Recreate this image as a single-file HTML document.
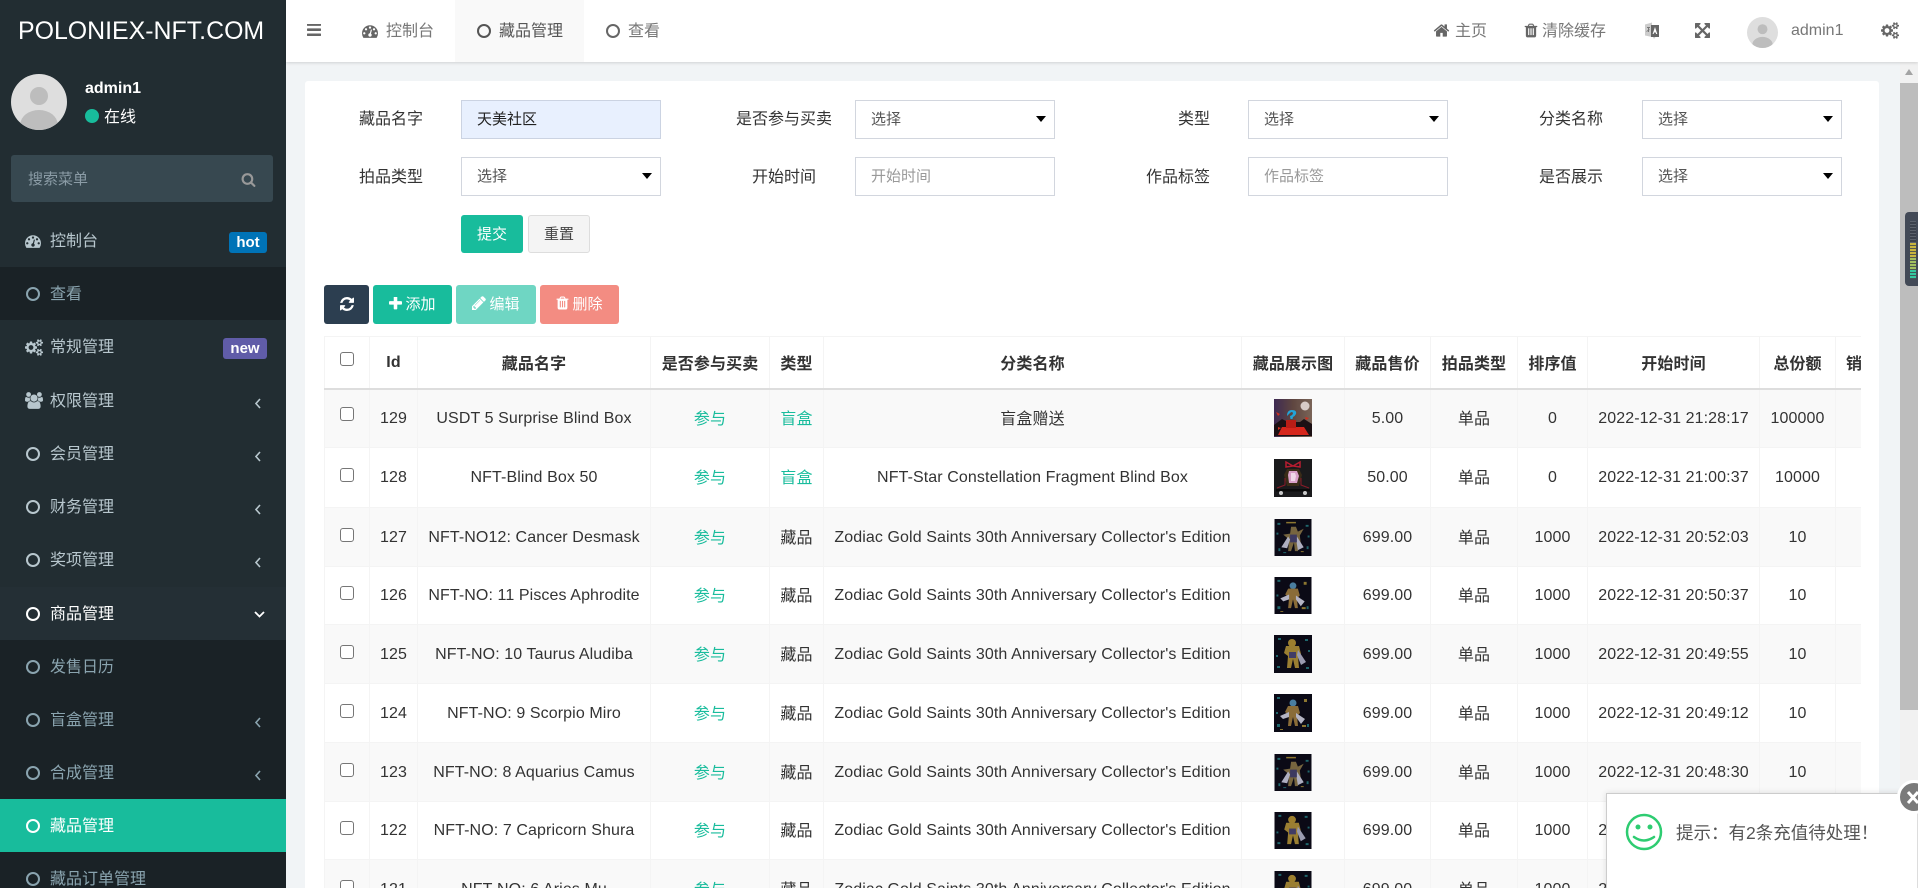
<!DOCTYPE html>
<html lang="zh-CN"><head><meta charset="utf-8"><title>藏品管理</title>
<style>
*{box-sizing:border-box}
html,body{margin:0;padding:0;width:1918px;height:888px;overflow:hidden;background:#f1f4f6}
body{font-family:"Liberation Sans","Noto Sans CJK SC",sans-serif;font-size:16px;color:#333;position:relative}
.a{position:absolute}
.t{position:absolute;white-space:nowrap;line-height:24px;height:24px}
svg{display:block}
#side{position:absolute;left:0;top:0;width:286px;height:888px;background:#222d32;overflow:hidden}
.m{position:absolute;left:0;width:286px;height:53px;color:#b8c7ce}
.m .l{position:absolute;left:50px;top:16px;line-height:24px;white-space:nowrap}
.m.s{background:#1a2226;color:#8aa4af}
.m.w{color:#fff}
.ic{position:absolute;left:25px;top:19px;fill:currentColor}
.ring{position:absolute;left:26px;top:20px;width:14px;height:14px;border:2.5px solid currentColor;border-radius:50%}
.chev{position:absolute;left:255px;top:24px;fill:none;stroke:currentColor;stroke-width:1.6}
.bd{position:absolute;color:#fff;font-weight:700;font-size:15px;line-height:21px;height:21px;text-align:center;border-radius:3px}
#head{position:absolute;left:286px;top:0;width:1632px;height:62px;background:#fff;box-shadow:0 1px 3px rgba(0,0,0,.14);z-index:3}
.h{position:absolute;color:#777;white-space:nowrap;line-height:24px}
.hi{position:absolute;fill:#666}
#panel{position:absolute;left:305px;top:81px;width:1574px;height:830px;background:#fff;border-radius:3px}
.lb{position:absolute;white-space:nowrap;line-height:24px;color:#333;text-align:right}
.inp{position:absolute;width:200px;height:39px;border:1px solid #d2d6de;background:#fff;font-size:15px;color:#555;line-height:37px;padding-left:15px}
.inp.ph{color:#999}
.inp.sel:after{content:"";position:absolute;right:8px;top:15px;border-left:5px solid transparent;border-right:5px solid transparent;border-top:6px solid #000}
.btn{position:absolute;height:39px;border-radius:3px;color:#fff;font-size:15px;line-height:39px;text-align:center;white-space:nowrap}
.btn svg{display:inline-block;vertical-align:-1px;fill:#fff;margin-right:3px}
#tw{position:absolute;left:324px;top:336px;width:1537px;height:560px;overflow:hidden}
table{border-collapse:collapse;table-layout:fixed;width:1600px;font-size:16px}
th,td{border:1px solid #f4f4f4;text-align:center;vertical-align:middle;padding:0 0 3px;white-space:nowrap;overflow:hidden;color:#333;letter-spacing:.1px}
th{font-weight:700;border-bottom:2px solid #ddd;height:52px;padding-bottom:0}
th:nth-child(2){padding-top:2px}
td:nth-child(2),td:nth-child(3),td:nth-child(6),td:nth-child(8),td:nth-child(10),td:nth-child(11),td:nth-child(12){padding:1px 0 0}
tr.o td{background:#f9f9f9}
td.g{color:#18bc9c}
.cb{display:block;width:14px;height:14px;margin:0 auto 2px;border:1px solid #767676;border-radius:3px;background:#fff}
td svg{margin:3px auto 0}
#pop{position:absolute;left:1606px;top:793px;width:312px;height:95px;background:#fff;border:1px solid #ccc;border-bottom:0;border-right:1px solid #ddd;box-shadow:0 0 6px rgba(0,0,0,.12);z-index:6}
</style></head><body>

<div id="side">
<div class="t" style="left:18px;top:17px;font-size:24.9px;line-height:28px;height:28px;color:#fff">POLONIEX-NFT.COM</div>
<svg class="a" style="left:11px;top:74px" width="56" height="56" viewBox="0 0 56 56"><defs><clipPath id="c1"><circle cx="28" cy="28" r="28"/></clipPath></defs><circle cx="28" cy="28" r="28" fill="#dedede"/><circle cx="28" cy="22" r="9" fill="#bdbdbd"/><ellipse cx="28" cy="50" rx="18.500" ry="14" fill="#bdbdbd" clip-path="url(#c1)"/></svg>
<div class="t" style="left:85px;top:77px;color:#fff;font-weight:700">admin1</div>
<div class="a" style="left:85px;top:109px;width:14px;height:14px;border-radius:50%;background:#18bc9c"></div>
<div class="t" style="left:104px;top:106px;color:#fff">在线</div>
<div class="a" style="left:11px;top:155px;width:262px;height:47px;background:#374850;border-radius:3px"></div>
<div class="t" style="left:28px;top:168px;font-size:15px;color:#8b9ca6">搜索菜单</div>
<svg class="a" style="left:241px;top:172px;fill:#999" width="15" height="15" viewBox="0 0 1792 1792"><path d="M1216 832q0-185-131.500-316.500t-316.500-131.500-316.500 131.500-131.500 316.500 131.500 316.500 316.500 131.500 316.500-131.500 131.500-316.500zm512 832q0 52-38 90t-90 38q-54 0-90-38l-343-342q-179 124-399 124-143 0-273.500-55.500t-225-150-150-225-55.500-273.500 55.500-273.500 150-225 225-150 273.500-55.500 273.500 55.500 225 150 150 225 55.500 273.500q0 220-124 399l343 343q37 37 37 90z"/></svg>

<div class="m" style="top:214px"><svg class="ic" width="16" height="16" viewBox="0 0 1792 1792"><path d="M384 1152q0-53-37.500-90.500t-90.500-37.500-90.500 37.500-37.500 90.500 37.500 90.500 90.500 37.500 90.500-37.500 37.500-90.500zm192-448q0-53-37.500-90.500t-90.500-37.500-90.500 37.500-37.500 90.500 37.500 90.500 90.500 37.500 90.500-37.500 37.500-90.500zm428 481l101-382q6-26-7.500-48.500t-38.500-29.500-48 6.500-30 39.500l-101 382q-60 5-107 43.500t-63 98.500q-20 77 20 146t117 89 146-20 89-117q16-60-6-117t-72-91zm660-33q0-53-37.500-90.500t-90.500-37.500-90.500 37.500-37.500 90.500 37.500 90.500 90.500 37.500 90.500-37.500 37.500-90.500zm-640-640q0-53-37.500-90.500t-90.500-37.500-90.500 37.500-37.500 90.500 37.500 90.500 90.500 37.500 90.500-37.500 37.500-90.500zm448 192q0-53-37.500-90.500t-90.500-37.500-90.500 37.500-37.500 90.500 37.500 90.500 90.500 37.500 90.500-37.500 37.500-90.500zm320 448q0 261-141 483-19 29-54 29h-1402q-35 0-54-29-141-221-141-483 0-182 71-348t191-286 286-191 348-71 348 71 286 191 191 286 71 348z"/></svg><span class="l">控制台</span><span class="bd" style="left:229px;top:18px;width:38px;background:#0073b7">hot</span></div>
<div class="m s" style="top:267px"><span class="ring"></span><span class="l">查看</span></div>
<div class="m" style="top:320px"><svg class="ic" width="18" height="17" viewBox="0 0 1920 1792"><path d="M896 896q0-106-75-181t-181-75-181 75-75 181 75 181 181 75 181-75 75-181zm768 512q0-52-38-90t-90-38-90 38-38 90q0 53 37.500 90.500t90.500 37.500 90.500-37.500 37.500-90.500zm0-1024q0-52-38-90t-90-38-90 38-38 90q0 53 37.500 90.500t90.500 37.500 90.500-37.500 37.500-90.500zm-384 421v185q0 10-7 19.500t-16 10.500l-155 24q-11 35-32 76 34 48 90 115 7 11 7 20 0 12-7 19-23 30-82.500 89.500t-78.500 59.500q-11 0-21-7l-115-90q-37 19-77 31-11 108-23 155-7 24-30 24h-186q-11 0-20-7.500t-10-17.500l-23-153q-34-10-75-31l-118 89q-7 7-20 7-11 0-21-8-144-133-144-160 0-9 7-19 10-14 41-53t47-61q-23-44-35-82l-152-24q-10-1-17-9.500t-7-19.500v-185q0-10 7-19.500t16-10.500l155-24q11-35 32-76-34-48-90-115-7-11-7-20 0-12 7-20 22-30 82-89t79-59q11 0 21 7l115 90q34-18 77-32 11-108 23-154 7-24 30-24h186q11 0 20 7.500t10 17.500l23 153q34 10 75 31l118-89q8-7 20-7 11 0 21 8 144 133 144 160 0 8-7 19-12 16-42 54t-45 60q23 48 34 82l152 23q10 2 17 10.500t7 19.500zm640 533v140q0 16-149 31-12 27-30 52 51 113 51 138 0 4-4 7-122 71-124 71-8 0-46-47t-52-68q-20 2-30 2t-30-2q-14 21-52 68t-46 47q-2 0-124-71-4-3-4-7 0-25 51-138-18-25-30-52-149-15-149-31v-140q0-16 149-31 13-29 30-52-51-113-51-138 0-4 4-7 4-2 35-20t59-34 30-16q8 0 46 46.500t52 67.500q20-2 30-2t30 2q51-71 92-112l6-2q4 0 124 70 4 3 4 7 0 25-51 138 17 23 30 52 149 15 149 31zm0-1024v140q0 16-149 31-12 27-30 52 51 113 51 138 0 4-4 7-122 71-124 71-8 0-46-47t-52-68q-20 2-30 2t-30-2q-14 21-52 68t-46 47q-2 0-124-71-4-3-4-7 0-25 51-138-18-25-30-52-149-15-149-31v-140q0-16 149-31 13-29 30-52-51-113-51-138 0-4 4-7 4-2 35-20t59-34 30-16q8 0 46 46.500t52 67.500q20-2 30-2t30 2q51-71 92-112l6-2q4 0 124 70 4 3 4 7 0 25-51 138 17 23 30 52 149 15 149 31z"/></svg><span class="l">常规管理</span><span class="bd" style="left:223px;top:18px;width:44px;background:#605ca8">new</span></div>
<div class="m" style="top:374px"><svg class="ic" style="top:18px" width="18" height="17" viewBox="0 0 1920 1792"><path d="M593 896q-162 5-265 128h-134q-82 0-138-40.500t-56-118.500q0-353 124-353 6 0 43.500 21t97.500 42.500 119 21.500q67 0 133-23-5 37-5 66 0 139 81 256zm1071 637q0 120-73 189.500t-194 69.500h-874q-121 0-194-69.500t-73-189.500q0-53 3.500-103.500t14-109 26.500-108.500 43-97.500 62-81 85.500-53.500 111.500-20q10 0 43 21.500t73 48 107 48 135 21.500 135-21.500 107-48 73-48 43-21.500q61 0 111.500 20t85.500 53.500 62 81 43 97.500 26.500 108.500 14 109 3.500 103.500zm-1024-1277q0 106-75 181t-181 75-181-75-75-181 75-181 181-75 181 75 75 181zm704 384q0 159-112.500 271.500t-271.500 112.500-271.500-112.500-112.500-271.500 112.500-271.500 271.500-112.500 271.500 112.500 112.500 271.500zm576 225q0 78-56 118.500t-138 40.500h-134q-103-123-265-128 81-117 81-256 0-29-5-66 66 23 133 23 59 0 119-21.500t97.500-42.500 43.500-21q124 0 124 353zm-128-609q0 106-75 181t-181 75-181-75-75-181 75-181 181-75 181 75 75 181z"/></svg><span class="l">权限管理</span><svg class="chev" width="6" height="11" viewBox="0 0 6 11"><path d="M5 1L1 5.500 5 10"/></svg></div>
<div class="m" style="top:427px"><span class="ring"></span><span class="l">会员管理</span><svg class="chev" width="6" height="11" viewBox="0 0 6 11"><path d="M5 1L1 5.500 5 10"/></svg></div>
<div class="m" style="top:480px"><span class="ring"></span><span class="l">财务管理</span><svg class="chev" width="6" height="11" viewBox="0 0 6 11"><path d="M5 1L1 5.500 5 10"/></svg></div>
<div class="m" style="top:533px"><span class="ring"></span><span class="l">奖项管理</span><svg class="chev" width="6" height="11" viewBox="0 0 6 11"><path d="M5 1L1 5.500 5 10"/></svg></div>
<div class="m w" style="top:587px;background:#242f35"><span class="ring"></span><span class="l">商品管理</span><svg class="chev" style="left:254px;top:24px;stroke-width:1.8" width="11" height="7" viewBox="0 0 11 7"><path d="M1 1l4.500 4.500L10 1"/></svg></div>
<div class="m s" style="top:640px"><span class="ring"></span><span class="l">发售日历</span></div>
<div class="m s" style="top:693px"><span class="ring"></span><span class="l">盲盒管理</span><svg class="chev" width="6" height="11" viewBox="0 0 6 11"><path d="M5 1L1 5.500 5 10"/></svg></div>
<div class="m s" style="top:746px"><span class="ring"></span><span class="l">合成管理</span><svg class="chev" width="6" height="11" viewBox="0 0 6 11"><path d="M5 1L1 5.500 5 10"/></svg></div>
<div class="m w" style="top:799px;background:#18bc9c"><span class="ring"></span><span class="l">藏品管理</span></div>
<div class="m s" style="top:852px;height:36px"><span class="ring"></span><span class="l">藏品订单管理</span></div>
</div>

<div id="head">
<div class="a" style="left:169px;top:0;width:129px;height:62px;background:#f9f9f9"></div>
<svg class="hi" style="left:21px;top:24px" width="14" height="12" viewBox="128 320 1536 1216" preserveAspectRatio="none"><path d="M1664 1344v128q0 26-19 45t-45 19h-1408q-26 0-45-19t-19-45v-128q0-26 19-45t45-19h1408q26 0 45 19t19 45zm0-512v128q0 26-19 45t-45 19h-1408q-26 0-45-19t-19-45v-128q0-26 19-45t45-19h1408q26 0 45 19t19 45zm0-512v128q0 26-19 45t-45 19h-1408q-26 0-45-19t-19-45v-128q0-26 19-45t45-19h1408q26 0 45 19t19 45z"/></svg>
<svg class="hi" style="left:76px;top:23px" width="16" height="16" viewBox="0 0 1792 1792"><path d="M384 1152q0-53-37.500-90.500t-90.500-37.500-90.500 37.500-37.500 90.500 37.500 90.500 90.500 37.500 90.500-37.500 37.500-90.500zm192-448q0-53-37.500-90.500t-90.500-37.500-90.500 37.500-37.500 90.500 37.500 90.500 90.500 37.500 90.500-37.500 37.500-90.500zm428 481l101-382q6-26-7.500-48.500t-38.500-29.500-48 6.500-30 39.500l-101 382q-60 5-107 43.500t-63 98.500q-20 77 20 146t117 89 146-20 89-117q16-60-6-117t-72-91zm660-33q0-53-37.500-90.500t-90.500-37.500-90.500 37.500-37.500 90.500 37.500 90.500 90.500 37.500 90.500-37.500 37.500-90.500zm-640-640q0-53-37.500-90.500t-90.500-37.500-90.500 37.500-37.500 90.500 37.500 90.500 90.500 37.500 90.500-37.500 37.500-90.500zm448 192q0-53-37.500-90.500t-90.500-37.500-90.500 37.500-37.500 90.500 37.500 90.500 90.500 37.500 90.500-37.500 37.500-90.500zm320 448q0 261-141 483-19 29-54 29h-1402q-35 0-54-29-141-221-141-483 0-182 71-348t191-286 286-191 348-71 348 71 286 191 191 286 71 348z"/></svg>
<span class="h" style="left:100px;top:20px">控制台</span>
<span class="a" style="left:191px;top:24px;width:14px;height:14px;border:2.5px solid #555;border-radius:50%"></span>
<span class="h" style="left:213px;top:20px;color:#555">藏品管理</span>
<span class="a" style="left:320px;top:24px;width:14px;height:14px;border:2.5px solid #666;border-radius:50%"></span>
<span class="h" style="left:342px;top:20px">查看</span>
<svg class="hi" style="left:1147px;top:22px" width="17" height="17" viewBox="0 0 1792 1792"><path d="M1472 992v480q0 26-19 45t-45 19h-384v-384h-256v384h-384q-26 0-45-19t-19-45v-480q0-1 .5-3t.5-3l575-474 575 474q1 2 1 6zm223-69l-62 74q-8 9-21 11h-3q-13 0-21-7l-692-577-692 577q-12 8-24 7-13-2-21-11l-62-74q-8-10-7-23.500t11-21.500l719-599q32-26 76-26t76 26l244 204v-195q0-14 9-23t23-9h192q14 0 23 9t9 23v408l219 182q10 8 11 21.500t-7 23.500z"/></svg>
<span class="h" style="left:1169px;top:20px">主页</span>
<svg class="hi" style="left:1237px;top:22px" width="16" height="17" viewBox="0 0 1792 1792"><path d="M704 1376v-704q0-14-9-23t-23-9h-64q-14 0-23 9t-9 23v704q0 14 9 23t23 9h64q14 0 23-9t9-23zm256 0v-704q0-14-9-23t-23-9h-64q-14 0-23 9t-9 23v704q0 14 9 23t23 9h64q14 0 23-9t9-23zm256 0v-704q0-14-9-23t-23-9h-64q-14 0-23 9t-9 23v704q0 14 9 23t23 9h64q14 0 23-9t9-23zm-544-992h448l-48-117q-7-9-17-11h-317q-10 2-17 11zm928 32v64q0 14-9 23t-23 9h-96v948q0 83-47 143.500t-113 60.500h-832q-66 0-113-58.500t-47-141.500v-952h-96q-14 0-23-9t-9-23v-64q0-14 9-23t23-9h309l70-167q15-37 54-63t79-26h320q40 0 79 26t54 63l70 167h309q14 0 23 9t9 23z"/></svg>
<span class="h" style="left:1256px;top:20px">清除缓存</span>
<svg class="a" style="left:1358px;top:22px" width="15" height="17" viewBox="0 0 15 17"><path d="M1 2.500L8 .5V15L1 13.500z" fill="#ccc"/><path d="M3 5h3v1H3zm1 1h1v4H4zM2.500 9l3-2v1l-3 2z" fill="#777"/><path d="M7 3h8v12H7z" fill="#666"/><path d="M11 5l2.300 7h-1.200l-.4-1.500H10L9.700 12H8.600z" fill="#fff"/><path d="M9 15l1 2 1.500-2z" fill="#ccc"/></svg>
<svg class="hi" style="left:1409px;top:23px" width="15" height="15" viewBox="128 128 1536 1536"><path d="M1411 541l-355 355 355 355 144-144q29-31 70-14 39 17 39 59v448q0 26-19 45t-45 19h-448q-42 0-59-40-17-39 14-69l144-144-355-355-355 355 144 144q31 30 14 69-17 40-59 40h-448q-26 0-45-19t-19-45v-448q0-42 40-59 39-17 69 14l144 144 355-355-355-355-144 144q-19 19-45 19-12 0-24-5-40-17-40-59v-448q0-26 19-45t45-19h448q42 0 59 40 17 39-14 69l-144 144 355 355 355-355-144-144q-31-30-14-69 17-40 59-40h448q26 0 45 19t19 45v448q0 42-39 59-13 5-25 5-26 0-45-19z"/></svg>
<svg class="a" style="left:1461px;top:17px" width="31" height="31" viewBox="0 0 56 56"><defs><clipPath id="c2"><circle cx="28" cy="28" r="28"/></clipPath></defs><circle cx="28" cy="28" r="28" fill="#dedede"/><circle cx="28" cy="22" r="9" fill="#bdbdbd"/><ellipse cx="28" cy="50" rx="18.500" ry="14" fill="#bdbdbd" clip-path="url(#c2)"/></svg>
<span class="h" style="left:1505px;top:19px">admin1</span>
<svg class="hi" style="left:1595px;top:22px" width="18" height="17" viewBox="0 0 1920 1792"><path d="M896 896q0-106-75-181t-181-75-181 75-75 181 75 181 181 75 181-75 75-181zm768 512q0-52-38-90t-90-38-90 38-38 90q0 53 37.500 90.500t90.500 37.500 90.500-37.500 37.500-90.500zm0-1024q0-52-38-90t-90-38-90 38-38 90q0 53 37.500 90.500t90.500 37.500 90.500-37.500 37.500-90.500zm-384 421v185q0 10-7 19.500t-16 10.500l-155 24q-11 35-32 76 34 48 90 115 7 11 7 20 0 12-7 19-23 30-82.500 89.500t-78.500 59.500q-11 0-21-7l-115-90q-37 19-77 31-11 108-23 155-7 24-30 24h-186q-11 0-20-7.500t-10-17.500l-23-153q-34-10-75-31l-118 89q-7 7-20 7-11 0-21-8-144-133-144-160 0-9 7-19 10-14 41-53t47-61q-23-44-35-82l-152-24q-10-1-17-9.500t-7-19.500v-185q0-10 7-19.500t16-10.500l155-24q11-35 32-76-34-48-90-115-7-11-7-20 0-12 7-20 22-30 82-89t79-59q11 0 21 7l115 90q34-18 77-32 11-108 23-154 7-24 30-24h186q11 0 20 7.500t10 17.500l23 153q34 10 75 31l118-89q8-7 20-7 11 0 21 8 144 133 144 160 0 8-7 19-12 16-42 54t-45 60q23 48 34 82l152 23q10 2 17 10.500t7 19.500zm640 533v140q0 16-149 31-12 27-30 52 51 113 51 138 0 4-4 7-122 71-124 71-8 0-46-47t-52-68q-20 2-30 2t-30-2q-14 21-52 68t-46 47q-2 0-124-71-4-3-4-7 0-25 51-138-18-25-30-52-149-15-149-31v-140q0-16 149-31 13-29 30-52-51-113-51-138 0-4 4-7 4-2 35-20t59-34 30-16q8 0 46 46.500t52 67.500q20-2 30-2t30 2q51-71 92-112l6-2q4 0 124 70 4 3 4 7 0 25-51 138 17 23 30 52 149 15 149 31zm0-1024v140q0 16-149 31-12 27-30 52 51 113 51 138 0 4-4 7-122 71-124 71-8 0-46-47t-52-68q-20 2-30 2t-30-2q-14 21-52 68t-46 47q-2 0-124-71-4-3-4-7 0-25 51-138-18-25-30-52-149-15-149-31v-140q0-16 149-31 13-29 30-52-51-113-51-138 0-4 4-7 4-2 35-20t59-34 30-16q8 0 46 46.500t52 67.500q20-2 30-2t30 2q51-71 92-112l6-2q4 0 124 70 4 3 4 7 0 25-51 138 17 23 30 52 149 15 149 31z"/></svg>
</div>

<div id="panel"></div>

<span class="lb" style="left:359px;top:108px">藏品名字</span>
<div class="inp" style="left:461px;top:100px;background:#e8f0fe;border-color:#cbd3e2;color:#222">天美社区</div>
<span class="lb" style="left:736px;top:108px">是否参与买卖</span>
<div class="inp sel" style="left:855px;top:100px">选择</div>
<span class="lb" style="left:1178px;top:108px">类型</span>
<div class="inp sel" style="left:1248px;top:100px">选择</div>
<span class="lb" style="left:1539px;top:108px">分类名称</span>
<div class="inp sel" style="left:1642px;top:100px">选择</div>

<span class="lb" style="left:359px;top:166px">拍品类型</span>
<div class="inp sel" style="left:461px;top:157px">选择</div>
<span class="lb" style="left:752px;top:166px">开始时间</span>
<div class="inp ph" style="left:855px;top:157px">开始时间</div>
<span class="lb" style="left:1146px;top:166px">作品标签</span>
<div class="inp ph" style="left:1248px;top:157px">作品标签</div>
<span class="lb" style="left:1539px;top:166px">是否展示</span>
<div class="inp sel" style="left:1642px;top:157px">选择</div>

<div class="btn" style="left:461px;top:215px;width:62px;height:38px;background:#18bc9c;line-height:39px">提交</div>
<div class="btn" style="left:528px;top:215px;width:62px;height:38px;background:#f4f4f4;border:1px solid #ddd;color:#444;line-height:37px">重置</div>

<div class="btn" style="left:324px;top:285px;width:45px;background:#2c3e50"><svg style="margin:12px auto 0;vertical-align:top" width="14" height="14" viewBox="128 128 1536 1536"><path d="M1639 1056q0 5-1 7-64 268-268 434.500t-478 166.500q-146 0-282.500-55t-243.500-157l-129 129q-19 19-45 19t-45-19-19-45v-448q0-26 19-45t45-19h448q26 0 45 19t19 45-19 45l-137 137q71 66 161 102t187 36q134 0 250-65t186-179q11-17 53-117 8-23 30-23h192q13 0 22.500 9.500t9.500 22.500zm25-800v448q0 26-19 45t-45 19h-448q-26 0-45-19t-19-45 19-45l138-138q-148-137-349-137-134 0-250 65t-186 179q-11 17-53 117-8 23-30 23h-199q-13 0-22.500-9.500t-9.500-22.500v-7q65-268 270-434.500t480-166.500q146 0 284 55.500t245 156.500l130-129q19-19 45-19t45 19 19 45z"/></svg></div>
<div class="btn" style="left:373px;top:285px;width:79px;background:#18bc9c"><svg width="13" height="13" viewBox="192 192 1408 1408"><path d="M1600 736v192q0 40-28 68t-68 28h-416v416q0 40-28 68t-68 28h-192q-40 0-68-28t-28-68v-416h-416q-40 0-68-28t-28-68v-192q0-40 28-68t68-28h416v-416q0-40 28-68t68-28h192q40 0 68 28t28 68v416h416q40 0 68 28t28 68z"/></svg>添加</div>
<div class="btn" style="left:456px;top:285px;width:80px;background:#6fd6c3"><svg width="14" height="14" viewBox="128 128 1536 1536"><path d="M491 1536l91-91-235-235-91 91v107h128v128h107zm523-928q0-22-22-22-10 0-17 7l-542 542q-7 7-7 17 0 22 22 22 10 0 17-7l542-542q7-7 7-17zm-54-192l416 416-832 832h-416v-416zm683 96q0 53-37 90l-166 166-416-416 166-165q36-38 90-38 53 0 91 38l235 234q37 39 37 91z"/></svg>编辑</div>
<div class="btn" style="left:540px;top:285px;width:79px;background:#f38c82"><svg width="13" height="14" viewBox="128 128 1536 1536"><path d="M704 1376v-704q0-14-9-23t-23-9h-64q-14 0-23 9t-9 23v704q0 14 9 23t23 9h64q14 0 23-9t9-23zm256 0v-704q0-14-9-23t-23-9h-64q-14 0-23 9t-9 23v704q0 14 9 23t23 9h64q14 0 23-9t9-23zm256 0v-704q0-14-9-23t-23-9h-64q-14 0-23 9t-9 23v704q0 14 9 23t23 9h64q14 0 23-9t9-23zm-544-992h448l-48-117q-7-9-17-11h-317q-10 2-17 11zm928 32v64q0 14-9 23t-23 9h-96v948q0 83-47 143.500t-113 60.500h-832q-66 0-113-58.500t-47-141.500v-952h-96q-14 0-23-9t-9-23v-64q0-14 9-23t23-9h309l70-167q15-37 54-63t79-26h320q40 0 79 26t54 63l70 167h309q14 0 23 9t9 23z"/></svg>删除</div>

<svg width="0" height="0" style="position:absolute"><defs>
<symbol id="f1" viewBox="0 0 38 38"><rect width="38" height="38" fill="#0b0a16"/><path d="M3 4h3v2H3zM32 6h3v2h-3zM4 30h2v3H4zM33 28h2v3h-2zM2 14h2v2H2zM34 17h2v2h-2zM9 34h3v1H9z" fill="#1f666c"/><path d="M12 3h10v1.500H12zM27 33h3v1h-3z" fill="#8c7630"/><path d="M17 8h5l2 5 6-3-4 7 1 8-3 8h-3l-1-9-3 9h-3l1-12-6-5 7-1z" fill="#77653f"/><path d="M14 18l-7 11 6 1 3-9zM23 18l7 11-6 3-2-12z" fill="#aeaec0"/><path d="M16 16h7v8h-7z" fill="#3d3960"/></symbol>
<symbol id="f2" viewBox="0 0 38 38"><rect width="38" height="38" fill="#0b0a16"/><path d="M3 3h3v2H3zM33 30h2v3h-2zM3 30h3v3H3zM2 18h2v2H2z" fill="#1f666c"/><path d="M30 5h3v3h-3zM28 31h4v2h-4zM6 35h3v1H6z" fill="#8c7630"/><circle cx="19" cy="9" r="3.500" fill="#4a7ea0"/><path d="M14 12h10l2 7-3 3 1 10h-3l-2-9-2 9h-3l1-11-4-3z" fill="#8a6c38"/><path d="M6 22l9-4v5l-6 2zM22 19l9 6-4 5-5-7z" fill="#b4b4c4"/></symbol>
<symbol id="f3" viewBox="0 0 38 38"><rect width="38" height="38" fill="#0b0a16"/><path d="M4 3h3v2H4zM31 4h3v2h-3zM32 32h3v2h-3zM3 31h3v2H3zM34 15h2v2h-2zM2 20h2v2H2z" fill="#1f666c"/><circle cx="18" cy="8" r="4" fill="#9c7e2e"/><path d="M12 11h13l2 8-3 2 1 12h-4l-2-9-2 9h-4l1-12-4-3z" fill="#9a7e32"/><path d="M24 15l8 12-5 3-4-10z" fill="#9a9bb0"/><path d="M15 17h7v6h-7z" fill="#413c66"/></symbol>
<symbol id="b1" viewBox="0 0 38 38"><defs><linearGradient id="bg1" x1="0" y1="0" x2="1" y2="0"><stop offset="0" stop-color="#3e2a52"/><stop offset=".5" stop-color="#5f4640"/><stop offset="1" stop-color="#7a6558"/></linearGradient></defs><rect width="38" height="38" fill="url(#bg1)"/><circle cx="31" cy="7" r="4.500" fill="#d8ccc8"/><path d="M0 26l8-6 6 3h12l4-3 8 5v12H0z" fill="#1c1014"/><path d="M4 36l4-8h22l5 8z" fill="#d6261c"/><path d="M12 21h10v8H12z" fill="#b81d16"/><path d="M2 13l4 2-2 2zM31 18l4 1-3 2zM4 28l3 1-3 2z" fill="#d03020"/><path d="M13 17q0-6 5-6 5 0 4 4-1 2-3 3l-.5 2h-2l-.5-3q3-1 3-3-1-2-3 0z" fill="#22a4d8"/></symbol>
<symbol id="b2" viewBox="0 0 38 38"><rect width="38" height="38" fill="#1a1a1c"/><path d="M19 7l-7-4v5zM19 7l7-4v5z" fill="none" stroke="#b81c30" stroke-width="1.500"/><path d="M13 10h12l3 6-3 11H13l-3-11z" fill="#3a2c18"/><path d="M15 12h8l2 5-2 7h-8l-1-8z" fill="#d8a0c8"/><path d="M17 14h4l1 3-1 5h-4z" fill="#f0d8e8"/><path d="M3 29l8-3v-7M35 29l-8-3v-7" stroke="#8a1a28" fill="none"/><rect x="2" y="30" width="34" height="2.500" fill="#0a0a0a"/><circle cx="7" cy="34" r="2" fill="#c8c8c8"/><circle cx="31" cy="34" r="2" fill="#c8c8c8"/></symbol>
</defs></svg>

<div id="tw"><table>
<colgroup><col style="width:45px"><col style="width:48px"><col style="width:233px"><col style="width:119px"><col style="width:54px"><col style="width:418px"><col style="width:103px"><col style="width:86px"><col style="width:87px"><col style="width:70px"><col style="width:172px"><col style="width:76px"><col style="width:89px"></colgroup>
<tr><th><span class="cb" style="margin-bottom:6px"></span></th><th>Id</th><th>藏品名字</th><th>是否参与买卖</th><th>类型</th><th>分类名称</th><th>藏品展示图</th><th>藏品售价</th><th>拍品类型</th><th>排序值</th><th>开始时间</th><th>总份额</th><th style="text-align:left;padding-left:10px">销量</th></tr>
<tr class="o" style="height:59px"><td><span class="cb" style="margin-bottom:6px"></span></td><td>129</td><td>USDT 5 Surprise Blind Box</td><td class="g">参与</td><td class="g">盲盒</td><td style="padding:0 0 3px">盲盒赠送</td><td><svg width="38" height="38"><use href="#b1"/></svg></td><td>5.00</td><td>单品</td><td>0</td><td>2022-12-31 21:28:17</td><td>100000</td><td></td></tr>
<tr style="height:60px"><td><span class="cb"></span></td><td>128</td><td>NFT-Blind Box 50</td><td class="g">参与</td><td class="g">盲盒</td><td>NFT-Star Constellation Fragment Blind Box</td><td><svg width="38" height="38"><use href="#b2"/></svg></td><td>50.00</td><td>单品</td><td>0</td><td>2022-12-31 21:00:37</td><td>10000</td><td></td></tr>
<tr class="o" style="height:59px"><td><span class="cb"></span></td><td>127</td><td>NFT-NO12: Cancer Desmask</td><td class="g">参与</td><td>藏品</td><td>Zodiac Gold Saints 30th Anniversary Collector's Edition</td><td><svg width="38" height="37"><use href="#f1"/></svg></td><td>699.00</td><td>单品</td><td>1000</td><td>2022-12-31 20:52:03</td><td>10</td><td></td></tr>
<tr style="height:58px"><td><span class="cb"></span></td><td>126</td><td>NFT-NO: 11 Pisces Aphrodite</td><td class="g">参与</td><td>藏品</td><td>Zodiac Gold Saints 30th Anniversary Collector's Edition</td><td><svg width="38" height="37"><use href="#f2"/></svg></td><td>699.00</td><td>单品</td><td>1000</td><td>2022-12-31 20:50:37</td><td>10</td><td></td></tr>
<tr class="o" style="height:59px"><td><span class="cb"></span></td><td>125</td><td>NFT-NO: 10 Taurus Aludiba</td><td class="g">参与</td><td>藏品</td><td>Zodiac Gold Saints 30th Anniversary Collector's Edition</td><td><svg width="38" height="38"><use href="#f3"/></svg></td><td>699.00</td><td>单品</td><td>1000</td><td>2022-12-31 20:49:55</td><td>10</td><td></td></tr>
<tr style="height:59px"><td><span class="cb"></span></td><td>124</td><td>NFT-NO: 9 Scorpio Miro</td><td class="g">参与</td><td>藏品</td><td>Zodiac Gold Saints 30th Anniversary Collector's Edition</td><td><svg width="38" height="38"><use href="#f2"/></svg></td><td>699.00</td><td>单品</td><td>1000</td><td>2022-12-31 20:49:12</td><td>10</td><td></td></tr>
<tr class="o" style="height:59px"><td><span class="cb"></span></td><td>123</td><td>NFT-NO: 8 Aquarius Camus</td><td class="g">参与</td><td>藏品</td><td>Zodiac Gold Saints 30th Anniversary Collector's Edition</td><td><svg width="38" height="37"><use href="#f1"/></svg></td><td>699.00</td><td>单品</td><td>1000</td><td>2022-12-31 20:48:30</td><td>10</td><td></td></tr>
<tr style="height:58px"><td><span class="cb"></span></td><td>122</td><td>NFT-NO: 7 Capricorn Shura</td><td class="g">参与</td><td>藏品</td><td>Zodiac Gold Saints 30th Anniversary Collector's Edition</td><td><svg width="38" height="37"><use href="#f3"/></svg></td><td>699.00</td><td>单品</td><td>1000</td><td>2022-12-31 20:47:40</td><td>10</td><td></td></tr>
<tr class="o" style="height:59px"><td><span class="cb"></span></td><td>121</td><td>NFT-NO: 6 Aries Mu</td><td class="g">参与</td><td>藏品</td><td>Zodiac Gold Saints 30th Anniversary Collector's Edition</td><td><svg width="38" height="37"><use href="#f3"/></svg></td><td>699.00</td><td>单品</td><td>1000</td><td>2022-12-31 20:46:50</td><td>10</td><td></td></tr>
</table></div>

<div class="a" style="left:1900px;top:62px;width:18px;height:826px;background:#f1f1f1;z-index:2"></div>
<div class="a" style="left:1905px;top:69px;border-left:4.500px solid transparent;border-right:4.500px solid transparent;border-bottom:6px solid #a3a3a3;z-index:2"></div>
<div class="a" style="left:1900px;top:83px;width:18px;height:627px;background:#bdbdbd;z-index:2"></div>
<div class="a" style="left:1905px;top:212px;width:13px;height:74px;background:#434a57;border-radius:4px 0 0 4px;z-index:2"></div>
<div class="a" style="left:1910px;top:221px;width:6px;height:22px;background:repeating-linear-gradient(#5c626c 0 1px,#3b414c 1px 3px);z-index:2"></div>
<div class="a" style="left:1910px;top:243px;width:6px;height:15px;background:repeating-linear-gradient(#c8b53e 0 2px,#565a4e 2px 3px);z-index:2"></div>
<div class="a" style="left:1910px;top:258px;width:6px;height:12px;background:repeating-linear-gradient(#a3c060 0 2px,#505a50 2px 3px);z-index:2"></div>
<div class="a" style="left:1910px;top:270px;width:6px;height:9px;background:repeating-linear-gradient(#34c8a0 0 2px,#405a58 2px 3px);z-index:2"></div>

<div id="pop">
<svg class="a" style="left:18px;top:19px" width="38" height="38" viewBox="0 0 38 38"><circle cx="19" cy="19" r="17" fill="none" stroke="#2ecc71" stroke-width="2.500"/><circle cx="13" cy="14" r="2.500" fill="#2ecc71"/><circle cx="25" cy="14" r="2.500" fill="#2ecc71"/><path d="M9 24q10 7 20 0" fill="none" stroke="#2ecc71" stroke-width="2.500" stroke-linecap="round"/></svg>
<span class="t" style="left:69px;top:27px;color:#555;font-size:17.500px">提示：有2条充值待处理！</span>
</div>
<div class="a" style="left:1897px;top:780px;width:34px;height:34px;border-radius:50%;background:#7a7a7a;border:3px solid #fff;z-index:7"></div>
<svg class="a" style="left:1906px;top:790px;z-index:8" width="12" height="15" viewBox="0 0 12 15"><path d="M2 2l10 11M12 2L2 13" stroke="#fff" stroke-width="3"/></svg>
</body></html>
